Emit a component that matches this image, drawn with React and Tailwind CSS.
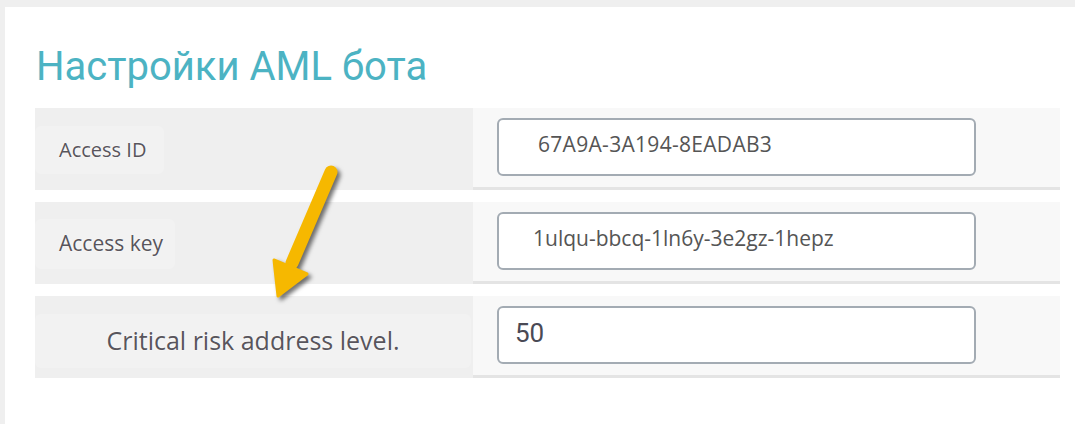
export default function App() {
  return (
    <div className="relative w-[1075px] h-[424px] bg-[#efefef] pt-[7px] pl-[5px] overflow-hidden">
      <div className="h-full bg-white pl-[30px] pt-[38px]">
        <h1 className="font-['Roboto',sans-serif] text-[40px] leading-[44px] text-[#4cb3c3] ml-[1px]">
          Настройки AML бота
        </h1>
        <div className="mt-[19px] w-[1025px] flex flex-col gap-[12px] font-['Open_Sans',sans-serif]">
          <Row
            label={<span className="pl-[24px] pr-[18px] py-[9px] rounded-md bg-[#f2f2f2] text-[20px] text-[#58555c] [text-shadow:0_0_2px_#fff]">Access ID</span>}
          >
            <div className="w-[479px] h-[58px] border-2 border-[#a3abb3] rounded-[6px] bg-white flex items-center pl-[39px] pb-[4px] text-[21px] tracking-[0.3px] text-[#555]">
              67A9A-3A194-8EADAB3
            </div>
          </Row>
          <Row
            label={<span className="pl-[24px] pr-[12px] py-[9px] rounded-md bg-[#f2f2f2] text-[21px] text-[#58555c] [text-shadow:0_0_2px_#fff]">Access key</span>}
          >
            <div className="w-[479px] h-[58px] border-2 border-[#a3abb3] rounded-[6px] bg-white flex items-center pl-[34px] pb-[4px] text-[21px] text-[#555]">
              1ulqu-bbcq-1ln6y-3e2gz-1hepz
            </div>
          </Row>
          <Row
            center
            label={<span className="w-[436px] py-[8px] rounded-md bg-[#f2f2f2] text-center text-[25px] text-[#58555c] [text-shadow:0_0_2px_#fff]">Critical risk address level.</span>}
          >
            <div className="w-[479px] h-[58px] border-2 border-[#a3abb3] rounded-[6px] bg-white flex items-center pl-[16px] pb-[2px] font-['Roboto',sans-serif] text-[26px] text-[#4a4a55]">
              50
            </div>
          </Row>
        </div>
      </div>
      <svg
        className="absolute left-[250px] top-[150px]"
        width="100"
        height="160"
        viewBox="0 0 100 160"
        style={{ filter: "drop-shadow(3px 3px 2px rgba(0,0,0,0.55))" }}
      >
        <line x1="81" y1="22" x2="42" y2="113" stroke="#f6b800" strokeWidth="13" strokeLinecap="round" />
        <polygon points="28,146 57,124 24,110" fill="#f6b800" stroke="#f6b800" strokeWidth="3" strokeLinejoin="round" />
      </svg>
    </div>
  );
}

function Row({ label, children, center }) {
  return (
    <div className="flex h-[82px]">
      <div className={"w-[438px] bg-[#efefef] flex items-center " + (center ? "justify-start pt-[8px]" : "pt-[2px]")}>
        {label}
      </div>
      <div className="flex-1 bg-[#f8f8f8] border-b-[3px] border-[#e4e4e4] flex items-center pl-[24px] pb-[2px]">
        {children}
      </div>
    </div>
  );
}
